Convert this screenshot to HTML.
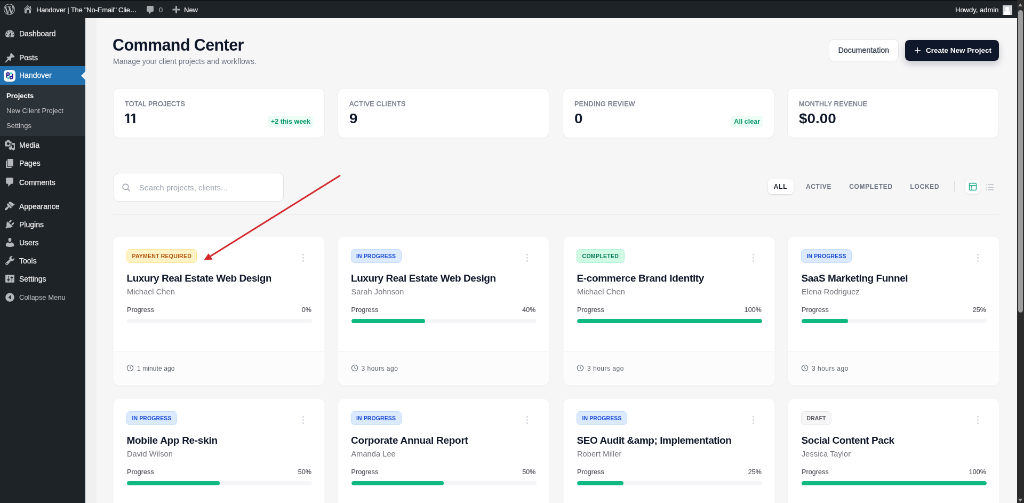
<!DOCTYPE html>
<html lang="en">
<head>
<meta charset="utf-8">
<title>Handover – Command Center</title>
<style>
*{box-sizing:border-box}
html,body{margin:0;padding:0}
body{width:1024px;height:503px;overflow:hidden;background:#f6f6f7;font-family:"Liberation Sans",sans-serif}
#root{position:absolute;left:0;top:0;width:1920px;height:943px;transform:scale(0.533333);transform-origin:0 0;overflow:hidden;will-change:transform;background:#f6f6f7;color:#0f172a}
/* ---------- WP admin bar ---------- */
#bar{position:absolute;left:0;top:0;width:1920px;height:34px;background:#1d2327;color:#f0f0f1;font-size:13px;line-height:32px;border-top:2px solid #101214}
#bar .it{-webkit-text-stroke:.2px;position:absolute;top:2px;height:30px;line-height:30px;white-space:nowrap}
#bar svg{position:absolute;fill:#a7aaad}
/* ---------- WP sidebar ---------- */
#side{position:absolute;left:0;top:34px;width:160px;height:909px;background:#1d2327;color:#f0f0f1;font-size:14px}
#side .mi{-webkit-text-stroke:.25px;position:absolute;left:0;width:160px;height:34px;line-height:34px;padding-left:36px;white-space:nowrap}
#side .mi svg{position:absolute;left:7.5px;top:6.5px;width:21px;height:21px;fill:#b4b8bc}
#side .act{background:#2271b1;color:#fff}
#side .act:after{content:"";position:absolute;right:0;top:10px;border:8px solid transparent;border-right-color:#f0f0f1;border-left-width:0}
#side .sub{position:absolute;left:0;top:125px;width:160px;height:96px;background:#2c3338}
#side .si{position:absolute;left:12px;font-size:13px;line-height:28px;height:28px;color:#c3c4c7;white-space:nowrap}
#side .si.cur{color:#fff;font-weight:bold}
/* ---------- scrollbar ---------- */
#sb{position:absolute;left:1906.5px;top:0;width:13.5px;height:943px;background:#2b2b2b}
#sb i{position:absolute;left:2.5px;top:18.5px;width:9px;height:567px;background:#9e9e9e;border-radius:5px}
#sb b{position:absolute;left:2.5px;width:0;height:0;border:4.5px solid transparent}
/* ---------- app ---------- */
#app{position:absolute;left:160px;top:32px;width:1745px;height:911px;background:#f6f6f7}
.abs{position:absolute}
h1{position:absolute;left:51px;top:32px;margin:0;font-size:30.5px;line-height:40px;font-weight:bold;letter-spacing:-0.6px;color:#0f172a;white-space:nowrap}
.subt{position:absolute;left:52px;top:72.500px;font-size:14px;line-height:20px;color:#6b7280;letter-spacing:.03px;white-space:nowrap}
.btn{position:absolute;top:41px;height:43px;border-radius:8px;font-size:13px;font-weight:bold;line-height:43px;text-align:center;white-space:nowrap}
.btn.doc{left:1394px;top:42px;height:41px;width:131px;background:#fff;border:1px solid #e4e4e7;color:#374151;font-weight:normal;-webkit-text-stroke:.35px #374151;font-size:14px;line-height:39px;letter-spacing:.1px}
.btn.new{left:1537px;top:43px;height:39px;width:176px;background:#0f172a;color:#fff;font-size:13.5px;line-height:39px;text-align:left;padding-left:39px;box-shadow:0 6px 14px rgba(15,23,42,.22)}
.btn.new:before{content:"";position:absolute;left:18px;top:19px;width:11px;height:1.4px;background:#fff}
.btn.new:after{content:"";position:absolute;left:22.800px;top:14px;width:1.400px;height:11px;background:#fff}
.stat{position:absolute;top:133px;width:397px;height:94px;background:#fff;border:1px solid #ececee;border-radius:12px;box-shadow:0 1px 2px rgba(0,0,0,.03)}
.stat .l{position:absolute;left:21px;top:21px;font-size:12.5px;line-height:16px;font-weight:normal;-webkit-text-stroke:.35px #6b7280;letter-spacing:.3px;color:#6b7280;white-space:nowrap}
.stat .v{position:absolute;left:21px;top:40px;font-size:25px;line-height:32px;font-weight:bold;color:#0f172a;white-space:nowrap;transform:scaleX(1.115);transform-origin:0 0}
.stat .v .one{display:inline-block;margin-left:-1.7px;margin-right:-2.300px;clip-path:polygon(0 0,9.400px 0,9.400px 100%,5.700px 100%,5.700px 21.500px,0 21.500px)}
.stat .p{position:absolute;right:20px;top:52px;height:21px;padding:0 6px;border-radius:5px;background:#ecfdf5;color:#059669;font-size:12.5px;line-height:21px;font-weight:bold;white-space:nowrap}
.search{position:absolute;left:53px;top:291.500px;width:319px;height:54.500px;background:#fff;border:1px solid #e2e2e6;border-radius:10px}
.search span{position:absolute;left:47px;top:1px;line-height:52.500px;font-size:14.5px;letter-spacing:.13px;color:#9ca3af;white-space:nowrap}
.search svg{position:absolute;left:14px;top:18.500px;width:17px;height:17px}
.hr{position:absolute;left:52px;top:370px;width:1661px;height:1px;background:#eaeaec}
.tab{position:absolute;top:304px;height:28px;line-height:28px;font-size:12px;font-weight:bold;letter-spacing:.7px;color:#6b7280;text-align:center;white-space:nowrap}
.tab.on{background:#fff;border-radius:7px;color:#111827;box-shadow:0 1px 3px rgba(0,0,0,.14)}
.card{position:absolute;width:397px;height:280px;background:#fff;border:1px solid #f8f8f9;border-radius:12px;box-shadow:0 1px 3px rgba(0,0,0,.04);overflow:hidden}
.card .bd{position:absolute;left:24px;top:23px;height:26px;line-height:24px;padding:0 9.5px;border-radius:7px;font-size:10.5px;font-weight:bold;letter-spacing:.1px;border:1px solid;white-space:nowrap}
.bd.pay{background:#fef3c7;border-color:#fde68a;color:#b45309}
.bd.prog{background:#dbeafe;border-color:#bfdbfe;color:#1d4ed8}
.bd.done{background:#d1fae5;border-color:#a7f3d0;color:#047857}
.bd.draft{background:#f6f6f7;border-color:#e4e4e7;color:#52525b}
.card .dots{position:absolute;left:353.500px;top:32px;width:4px}
.card .dots i{display:block;width:3px;height:3px;border-radius:2px;background:#cdd0d6;margin-bottom:3px}
.card .t{position:absolute;left:24.500px;top:64px;font-size:19px;line-height:28px;font-weight:bold;color:#0f172a;white-space:nowrap;letter-spacing:-.45px}
.card .c{position:absolute;left:25px;top:93px;font-size:14.5px;line-height:20px;color:#71717a;letter-spacing:.1px;white-space:nowrap}
.card .pl{-webkit-text-stroke:.2px #52525b;position:absolute;left:25px;top:128.5px;font-size:12.5px;line-height:16px;color:#52525b;letter-spacing:.1px;white-space:nowrap}
.card .pp{-webkit-text-stroke:.2px #52525b;position:absolute;right:24px;top:128.5px;font-size:12.5px;line-height:16px;color:#52525b;letter-spacing:.1px;white-space:nowrap}
.card .bar{position:absolute;left:25px;top:154px;width:347px;height:8px;border-radius:4px;background:#f5f5f7;overflow:hidden}
.card .bar i{display:block;height:8px;border-radius:4px;background:#10b981}
.card .ft{position:absolute;left:0;top:214px;width:395px;height:63px;border-top:1px solid #f0f0f2;background:#fcfcfc}
.card .ft span{position:absolute;left:44px;top:23.500px;font-size:12px;line-height:16px;color:#5b616b;white-space:nowrap;letter-spacing:.1px}
.card .ft svg{position:absolute;left:24px;top:24px}
</style>
</head>
<body>
<div id="root">

<!-- APP -->
<div id="app">
  <div class="abs" style="left:0;top:0;width:21px;height:911px;background:#f0f0f1"></div>
  <h1>Command Center</h1>
  <div class="subt">Manage your client projects and workflows.</div>
  <div class="btn doc">Documentation</div>
  <div class="btn new">Create New Project</div>

  <div class="stat" style="left:52px"><div class="l">TOTAL PROJECTS</div><div class="v"><span class="one">1</span><span class="one">1</span></div><div class="p">+2 this week</div></div>
  <div class="stat" style="left:473px"><div class="l">ACTIVE CLIENTS</div><div class="v">9</div></div>
  <div class="stat" style="left:895px"><div class="l">PENDING REVIEW</div><div class="v">0</div><div class="p">All clear</div></div>
  <div class="stat" style="left:1316px"><div class="l">MONTHLY REVENUE</div><div class="v">$0.00</div></div>

  <div class="search">
    <svg width="16" height="16" viewBox="0 0 16 16" fill="none" stroke="#9ca3af" stroke-width="1.5"><circle cx="7" cy="7" r="5"/><path d="M11 11l3.5 3.5"/></svg>
    <span>Search projects, clients...</span>
  </div>
  <div class="tab on" style="left:1279.500px;width:48px">ALL</div>
  <div class="tab" style="left:1345px;width:60px">ACTIVE</div>
  <div class="tab" style="left:1425px;width:96px">COMPLETED</div>
  <div class="tab" style="left:1541px;width:66px">LOCKED</div>
  <div class="abs" style="left:1629px;top:308px;width:1px;height:20px;background:#dadade"></div>
  <div class="abs" style="left:1650px;top:305px;width:27px;height:26px;border-radius:7px;background:#fff;box-shadow:0 1px 3px rgba(0,0,0,.12)">
    <svg class="abs" style="left:5.500px;top:5px" width="16" height="16" viewBox="0 0 16 16" fill="none" stroke="#10a37f" stroke-width="1.4"><rect x="1.5" y="1.5" width="13" height="13" rx="2"/><path d="M1.5 6h13M6 6v8.5"/></svg>
  </div>
  <svg class="abs" style="left:1688px;top:311px" width="16" height="16" viewBox="0 0 16 16" fill="none" stroke="#b6bac2" stroke-width="1.4"><path d="M5 3h10M5 8h10M5 13h10M1 3h1.5M1 8h1.5M1 13h1.5"/></svg>
  <div class="hr"></div>

  <!-- row 1 -->
  <div class="card" style="left:52px;top:411px"><div class="bd pay" style="letter-spacing:.22px">PAYMENT REQUIRED</div><div class="dots"><i></i><i></i><i></i></div><div class="t">Luxury Real Estate Web Design</div><div class="c">Michael Chen</div><div class="pl">Progress</div><div class="pp">0%</div><div class="bar"><i style="width:0"></i></div><div class="ft"><svg width="14" height="14" viewBox="0 0 14 14" fill="none" stroke="#6b7280" stroke-width="1.3"><circle cx="7" cy="7" r="5.6"/><path d="M7 3.8V7l2 1.3"/></svg><span>1 minute ago</span></div></div>
  <div class="card" style="left:472.500px;top:411px"><div class="bd prog">IN PROGRESS</div><div class="dots"><i></i><i></i><i></i></div><div class="t">Luxury Real Estate Web Design</div><div class="c">Sarah Johnson</div><div class="pl">Progress</div><div class="pp">40%</div><div class="bar"><i style="width:40%"></i></div><div class="ft"><svg width="14" height="14" viewBox="0 0 14 14" fill="none" stroke="#6b7280" stroke-width="1.3"><circle cx="7" cy="7" r="5.6"/><path d="M7 3.8V7l2 1.3"/></svg><span style="letter-spacing:.5px">3 hours ago</span></div></div>
  <div class="card" style="left:896px;top:411px"><div class="bd done" style="letter-spacing:.3px">COMPLETED</div><div class="dots"><i></i><i></i><i></i></div><div class="t" style="letter-spacing:-.34px">E-commerce Brand Identity</div><div class="c">Michael Chen</div><div class="pl">Progress</div><div class="pp">100%</div><div class="bar"><i style="width:100%"></i></div><div class="ft"><svg width="14" height="14" viewBox="0 0 14 14" fill="none" stroke="#6b7280" stroke-width="1.3"><circle cx="7" cy="7" r="5.6"/><path d="M7 3.8V7l2 1.3"/></svg><span style="letter-spacing:.5px">3 hours ago</span></div></div>
  <div class="card" style="left:1317px;top:411px"><div class="bd prog">IN PROGRESS</div><div class="dots"><i></i><i></i><i></i></div><div class="t">SaaS Marketing Funnel</div><div class="c">Elena Rodriguez</div><div class="pl">Progress</div><div class="pp">25%</div><div class="bar"><i style="width:25%"></i></div><div class="ft"><svg width="14" height="14" viewBox="0 0 14 14" fill="none" stroke="#6b7280" stroke-width="1.3"><circle cx="7" cy="7" r="5.6"/><path d="M7 3.8V7l2 1.3"/></svg><span style="letter-spacing:.5px">3 hours ago</span></div></div>

  <!-- row 2 -->
  <div class="card" style="left:52px;top:715px"><div class="bd prog">IN PROGRESS</div><div class="dots"><i></i><i></i><i></i></div><div class="t" style="letter-spacing:-.3px">Mobile App Re-skin</div><div class="c">David Wilson</div><div class="pl">Progress</div><div class="pp">50%</div><div class="bar"><i style="width:50%"></i></div></div>
  <div class="card" style="left:472.500px;top:715px"><div class="bd prog">IN PROGRESS</div><div class="dots"><i></i><i></i><i></i></div><div class="t" style="letter-spacing:-.29px">Corporate Annual Report</div><div class="c">Amanda Lee</div><div class="pl">Progress</div><div class="pp">50%</div><div class="bar"><i style="width:50%"></i></div></div>
  <div class="card" style="left:896px;top:715px"><div class="bd prog">IN PROGRESS</div><div class="dots"><i></i><i></i><i></i></div><div class="t">SEO Audit &amp;amp; Implementation</div><div class="c">Robert Miller</div><div class="pl">Progress</div><div class="pp">25%</div><div class="bar"><i style="width:25%"></i></div></div>
  <div class="card" style="left:1317px;top:715px"><div class="bd draft">DRAFT</div><div class="dots"><i></i><i></i><i></i></div><div class="t">Social Content Pack</div><div class="c">Jessica Taylor</div><div class="pl">Progress</div><div class="pp">100%</div><div class="bar"><i style="width:100%"></i></div></div>

  <!-- red annotation arrow -->
  <svg class="abs" style="left:0;top:0" width="1745" height="911" viewBox="0 0 1745 911" fill="none">
    <path d="M477 297.500 L232 450" stroke="#d4272b" stroke-width="2.900" stroke-linecap="round"/>
    <path d="M222 456.200 L231 443 L238.500 454.500 Z" fill="#d4272b"/>
  </svg>
</div>

<!-- SIDEBAR -->
<div id="side">
  <div class="mi" style="top:12px"><svg viewBox="0 0 20 20"><path fill-rule="evenodd" d="M3.76 16h12.48c1.1-1.37 1.76-3.11 1.76-5 0-4.42-3.58-8-8-8s-8 3.580-8 8c0 1.890.66 3.630 1.760 5zM10 4c.55 0 1 .45 1 1s-.45 1-1 1-1-.45-1-1 .45-1 1-1zM6 6c.55 0 1 .45 1 1s-.45 1-1 1-1-.45-1-1 .45-1 1-1zm8 0c.55 0 1 .45 1 1s-.45 1-1 1-1-.45-1-1 .45-1 1-1zm-5.370 5.550L12 7v6c0 1.100-.9 2-2 2s-2-.9-2-2c0-.57.24-1.080.63-1.450zM4 10c.55 0 1 .45 1 1s-.45 1-1 1-1-.45-1-1 .45-1 1-1zm12 0c.55 0 1 .45 1 1s-.45 1-1 1-1-.45-1-1 .45-1 1-1zm-5 3c0-.55-.45-1-1-1s-1 .45-1 1 .45 1 1 1 1-.45 1-1z"/></svg>Dashboard</div>
  <div class="mi" style="top:57px"><svg viewBox="0 0 20 20"><path fill-rule="evenodd" d="M10.44 3.020l1.820-1.820 6.360 6.350-1.830 1.820c-1.050-.68-2.480-.57-3.410.36l-.75.75c-.92.93-1.040 2.350-.35 3.410l-1.830 1.820-2.410-2.410-2.800 2.790c-.42.42-3.380 2.710-3.800 2.290s1.860-3.390 2.280-3.810l2.790-2.790L4.100 9.360l1.830-1.820c1.050.69 2.480.57 3.400-.36l.75-.75c.93-.92 1.050-2.350.36-3.410z"/></svg>Posts</div>
  <div class="mi act" style="top:90px;height:35.5px;line-height:35px">
    <svg viewBox="0 0 20 20" style="fill:none;left:7px;top:7px;width:22px;height:22px"><rect x="0" y="0" width="20" height="20" rx="5.500" fill="#fff"/><circle cx="7.200" cy="7" r="2.200" stroke="#2e1f8f" stroke-width="2"/><path d="M5 7v5.500" stroke="#2e1f8f" stroke-width="2" stroke-linecap="round"/><circle cx="12.800" cy="13" r="2.200" stroke="#2e1f8f" stroke-width="2"/><path d="M15 13V7.500" stroke="#2e1f8f" stroke-width="2" stroke-linecap="round"/><circle cx="12.600" cy="5.800" r="1.700" fill="#2dd4bf"/><circle cx="7.400" cy="14.200" r="1.700" fill="#2dd4bf"/><path d="M9 11.500l2-3" stroke="#5eead4" stroke-width="1.200"/></svg>Handover</div>
  <div class="sub">
    <div class="si cur" style="top:7px">Projects</div>
    <div class="si" style="top:35px">New Client Project</div>
    <div class="si" style="top:63px">Settings</div>
  </div>
  <div class="mi" style="top:221px"><svg viewBox="0 0 20 20"><path fill-rule="evenodd" d="M13 11V4c0-.55-.45-1-1-1h-1.670L9 1H5L3.670 3H2c-.55 0-1 .45-1 1v7c0 .55.45 1 1 1h10c.55 0 1-.45 1-1zM7 4.500c1.380 0 2.500 1.120 2.500 2.500S8.380 9.500 7 9.500 4.500 8.380 4.500 7 5.620 4.500 7 4.500zM14 6h5v10.500c0 1.380-1.120 2.500-2.500 2.500S14 17.880 14 16.500s1.120-2.500 2.500-2.500c.17 0 .34.020.5.050V9h-3v6.500c0 1.380-1.120 2.500-2.500 2.500S8 16.880 8 15.500 9.120 13 10.500 13c.17 0 .34.020.5.050V6z"/></svg>Media</div>
  <div class="mi" style="top:255px"><svg viewBox="0 0 20 20"><path fill-rule="evenodd" d="M6 15V2h10v13H6zm-1 1h8v2H3V5h2v11z"/></svg>Pages</div>
  <div class="mi" style="top:290.5px"><svg viewBox="0 0 20 20"><path fill-rule="evenodd" d="M5 2h9c1.100 0 2 .9 2 2v7c0 1.100-.9 2-2 2h-2l-5 5v-5H5c-1.100 0-2-.9-2-2V4c0-1.100.9-2 2-2z"/></svg>Comments</div>
  <div class="mi" style="top:335.5px"><svg viewBox="0 0 20 20"><path fill-rule="evenodd" d="M14.480 11.060L7.410 3.990l1.500-1.500c.5-.56 2.300-.47 3.510.32 1.210.8 1.430 1.280 2.910 2.100 1.180.64 2.450 1.260 4.450.85zm-.71.71L6.700 4.700 4.930 6.470c-.39.39-.39 1.020 0 1.410l1.060 1.060c.39.39.39 1.030 0 1.420-.6.6-1.430 1.110-2.210 1.690-.35.26-.7.53-1.010.84C1.430 14.230.4 16.080 1.400 17.070c.99 1 2.840-.03 4.180-1.360.31-.31.58-.66.85-1.020.57-.78 1.080-1.610 1.690-2.210.39-.39 1.020-.39 1.410 0l1.060 1.060c.39.39 1.020.39 1.410 0z"/></svg>Appearance</div>
  <div class="mi" style="top:369.5px"><svg viewBox="0 0 20 20"><path fill-rule="evenodd" d="M13.110 4.360L9.870 7.600 8 5.730l3.240-3.240c.35-.34 1.050-.2 1.560.32.52.51.66 1.210.31 1.550zm-8 1.770l.91-1.120 9.010 9.010-1.190.84c-.71.71-2.630 1.160-3.820 1.160H6.140L4.900 17.260c-.59.59-1.540.59-2.120 0-.59-.58-.59-1.530 0-2.120l1.240-1.240v-3.880c0-1.130.4-3.190 1.090-3.890zm7.260 3.970l3.240-3.240c.34-.35 1.040-.21 1.550.31.520.51.66 1.210.31 1.550l-3.240 3.250z"/></svg>Plugins</div>
  <div class="mi" style="top:403.5px"><svg viewBox="0 0 20 20"><path fill-rule="evenodd" d="M10 9.250c-2.270 0-2.730-3.440-2.730-3.440C7 4.020 7.820 2 9.970 2c2.160 0 2.980 2.020 2.710 3.810 0 0-.41 3.440-2.680 3.440zm0 2.570L12.720 10c2.390 0 4.520 2.330 4.520 4.530v2.490s-3.650 1.130-7.240 1.130c-3.650 0-7.240-1.130-7.240-1.130v-2.490c0-2.250 1.940-4.480 4.470-4.480z"/></svg>Users</div>
  <div class="mi" style="top:437.5px"><svg viewBox="0 0 20 20"><path fill-rule="evenodd" d="M16.680 9.770c-1.340 1.340-3.300 1.670-4.950.99l-5.410 6.520c-.99.99-2.590.99-3.580 0s-.99-2.590 0-3.570l6.520-5.420c-.68-1.650-.35-3.610.99-4.950 1.280-1.280 3.120-1.620 4.720-1.060l-2.890 2.890 2.820 2.820 2.860-2.870c.53 1.580.18 3.390-1.080 4.650zM3.810 16.210c.4.39 1.040.39 1.430 0 .4-.4.4-1.040 0-1.430-.39-.4-1.030-.4-1.430 0-.39.39-.39 1.030 0 1.430z"/></svg>Tools</div>
  <div class="mi" style="top:471.5px"><svg viewBox="0 0 20 20"><path fill-rule="evenodd" d="M18 16V4c0-.55-.45-1-1-1H3c-.55 0-1 .45-1 1v12c0 .55.45 1 1 1h14c.55 0 1-.45 1-1zM8 11h1c.55 0 1 .45 1 1s-.45 1-1 1H8v1.500c0 .28-.22.5-.5.5s-.5-.22-.5-.5V13H6c-.55 0-1-.45-1-1s.45-1 1-1h1V5.500c0-.28.22-.5.5-.5s.5.22.5.5V11zm5-2h-1c-.55 0-1-.45-1-1s.45-1 1-1h1V5.500c0-.28.22-.5.5-.5s.5.22.5.5V7h1c.55 0 1 .45 1 1s-.45 1-1 1h-1v5.500c0 .28-.22.5-.5.5s-.5-.22-.5-.5V9z"/></svg>Settings</div>
  <div class="mi" style="top:506.5px;color:#a7aaad;font-size:13px"><svg viewBox="0 0 20 20"><path fill-rule="evenodd" d="M10 2.160c4.330 0 7.840 3.510 7.840 7.840s-3.510 7.840-7.840 7.840S2.160 14.330 2.160 10 5.670 2.160 10 2.160zM11.840 14V6l-4.420 4z"/></svg>Collapse Menu</div>
</div>

<!-- ADMIN BAR -->
<div id="bar">
  <svg style="left:7px;top:5px" width="21" height="21" viewBox="0 0 20 20"><path fill-rule="evenodd" d="M20 10c0-5.510-4.490-10-10-10C4.480 0 0 4.490 0 10c0 5.520 4.480 10 10 10 5.510 0 10-4.480 10-10zM7.780 15.370L4.370 6.220c.55-.02 1.170-.08 1.170-.08.5-.06.44-1.130-.06-1.110 0 0-1.450.11-2.370.11-.18 0-.37 0-.58-.01C4.120 2.690 6.870 1.110 10 1.110c2.330 0 4.450.87 6.050 2.340-.68-.11-1.650.39-1.650 1.580 0 .74.45 1.360.9 2.100.35.61.55 1.360.55 2.460 0 1.490-1.400 5-1.400 5l-3.030-8.370c.54-.02.82-.17.82-.17.5-.05.44-1.250-.06-1.220 0 0-1.440.12-2.380.12-.87 0-2.330-.12-2.330-.12-.5-.03-.56 1.200-.06 1.220l.92.08 1.260 3.410zM17.410 10c.24-.64.74-1.870.43-4.250.7 1.290 1.050 2.710 1.050 4.250 0 3.290-1.730 6.240-4.400 7.780.97-2.590 1.940-5.200 2.920-7.780zM6.100 18.090C3.120 16.650 1.110 13.530 1.110 10c0-1.300.23-2.480.72-3.590C3.250 10.300 4.670 14.200 6.100 18.090zm4.030-6.630l2.580 6.980c-.86.29-1.760.45-2.710.45-.79 0-1.570-.11-2.290-.33.81-2.380 1.620-4.740 2.420-7.100z"/></svg>
  <svg style="left:42px;top:5px" width="20" height="20" viewBox="0 0 20 20"><path fill-rule="evenodd" d="M16 8.500l1.530 1.530-1.060 1.060L10 4.620l-6.470 6.470-1.060-1.060L10 2.500l4 4v-2h2v4zm-6-2.460l6 5.990V18H4v-5.970zM12 17v-5H8v5h4z"/></svg>
  <div class="it" style="left:68px;letter-spacing:-.19px">Handover | The "No-Email" Clie…</div>
  <svg style="left:272px;top:6.500px" width="20" height="20" viewBox="0 0 20 20"><path d="M5 2h9c1.100 0 2 .900 2 2v7c0 1.100-.900 2-2 2h-2l-5 5v-5H5c-1.100 0-2-.900-2-2V4c0-1.100.900-2 2-2z"/></svg>
  <div class="it" style="left:298px;color:#a7aaad">0</div>
  <div class="it" style="left:323px;top:7px;width:15px;height:18px;line-height:18px;font-size:0"><svg style="left:0;top:0" width="15" height="18" viewBox="0 0 15 18"><path d="M6 2h3v5.500h5.500v3H9V16H6v-5.500H.5v-3H6z"/></svg></div>
  <div class="it" style="left:345px">New</div>
  <div class="it" style="left:1791px">Howdy, admin</div>
  <div class="abs" style="left:1880px;top:7.500px;width:17.5px;height:18px;background:#d5d6d8;overflow:hidden"><div class="abs" style="left:5px;top:3px;width:7px;height:7px;border-radius:4px;background:#fff"></div><div class="abs" style="left:3px;top:10px;width:11px;height:9px;border-radius:4px 4px 0 0;background:#fff"></div></div>
</div>

<!-- SCROLLBAR -->
<div id="sb"><b style="top:6px;border-bottom-color:#9e9e9e;border-top-width:0;border-bottom-width:6px"></b><i></i><b style="top:935px;border-top-color:#9e9e9e;border-bottom-width:0;border-top-width:6px"></b></div>

</div>
</body>
</html>
